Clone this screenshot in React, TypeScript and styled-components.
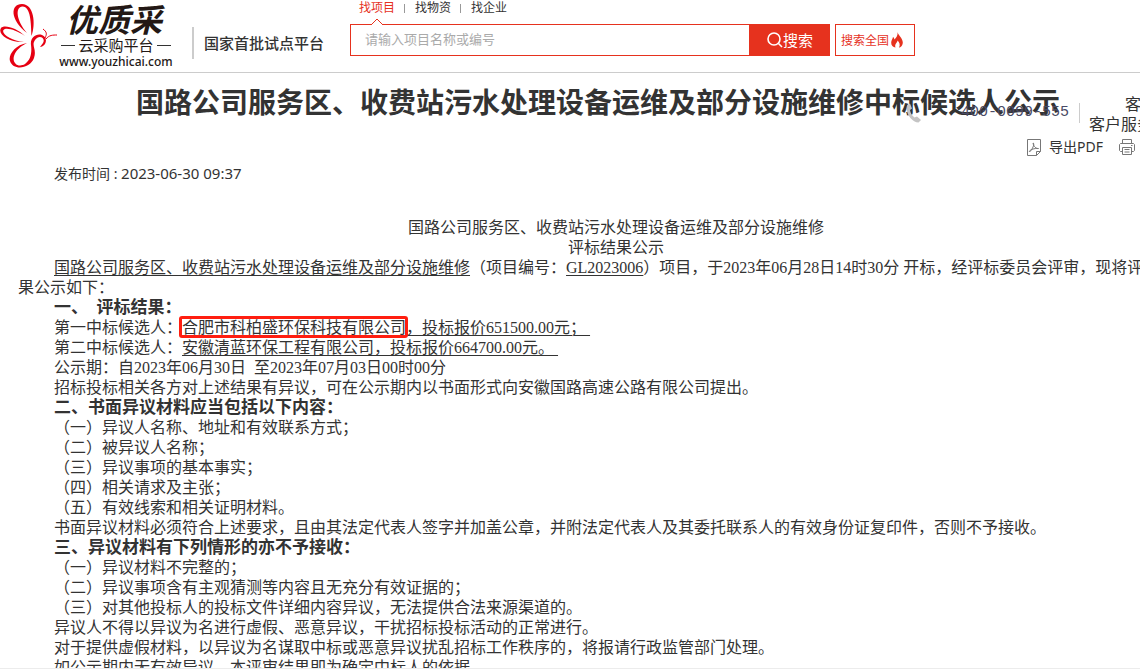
import React from 'react';
import styled, { createGlobalStyle } from 'styled-components';

const sans = `"Noto Sans", "Noto Sans CJK SC", sans-serif`;
const cjk = `"Noto Sans CJK SC", sans-serif`;
const red = '#e6321e';

const Global = createGlobalStyle`
  *, *::before, *::after { box-sizing: border-box; }
  body { margin: 0; background: #fff; color: #333; overflow: hidden; }
`;

const Viewport = styled.div`
  height: 100vh;
  overflow: hidden;
  border-bottom: 1px solid #ececec;
  font-family: ${sans};
`;

const Page = styled.div`
  position: relative;
  min-width: 1196px;
`;

const Header = styled.header`
  display: flex;
  align-items: flex-start;
  height: 73px;
  border-bottom: 1px solid #ccc;
`;

const Brand = styled.a`
  display: flex;
  width: 350px;
  color: #231815;
  text-decoration: none;
`;

const BrandName = styled.span`
  display: flex;
  flex-direction: column;
  align-items: center;
  width: 112px;
  margin-left: 3px;
`;

const Script = styled.span`
  padding-right: 4px;
  font: italic 700 32px/36px ${cjk};
`;

const Platform = styled.span`
  display: flex;
  align-items: center;
  gap: 3px;
  font: 400 15px/18px ${cjk};
  white-space: nowrap;
  &::before, &::after { content: ''; width: 14px; height: 1px; background: #333; }
`;

const Site = styled.span`
  font: 500 12px/16px ${sans};
`;

const Slogan = styled.span`
  align-self: flex-start;
  margin: 27px 0 0 20px;
  padding-left: 10px;
  border-left: 2px solid #ccc;
  font: 500 15px/32px ${cjk};
  color: #333;
  white-space: nowrap;
`;

const SearchArea = styled.div`
  display: flex;
  flex-direction: column;
`;

const Tabs = styled.nav`
  display: flex;
  height: 24px;
  padding-left: 9px;
  font: 12px/14px ${cjk};
`;

const Tab = styled.a<{ $active?: boolean }>`
  position: relative;
  color: ${p => (p.$active ? red : '#333')};
  text-decoration: none;
`;

const TabDivider = styled.span`
  width: 1px;
  height: 9px;
  margin: 4px 10px 0 9px;
  background: #999;
`;

const Caret = styled.svg`
  position: absolute;
  left: 11px;
  top: 18px;
`;

const SearchForm = styled.form`
  display: flex;
  height: 32px;
`;

const SearchInput = styled.input`
  width: 400px;
  padding: 0 14px 2px;
  border: 1px solid ${red};
  border-radius: 0;
  outline: 0;
  font: 13px/20px ${cjk};
  color: #333;
  &::placeholder { color: #aaa; opacity: 1; }
`;

const SearchButton = styled.button`
  display: flex;
  align-items: center;
  justify-content: center;
  width: 80px;
  padding: 0;
  border: 1px solid ${red};
  background: ${red};
  color: #fff;
  font: 400 15px/20px ${cjk};
`;

const NationwideButton = styled(SearchButton)`
  justify-content: flex-start;
  gap: 2px;
  margin-left: 5px;
  padding-left: 5px;
  background: #fff;
  color: ${red};
  font-size: 12px;
`;

const Hotline = styled.aside`
  position: absolute;
  left: 906px;
  top: 93px;
  display: flex;
  align-items: center;
  white-space: nowrap;
`;

const Phone = styled.span`
  margin-left: 40px;
  padding-right: 10px;
  border-right: 1px solid #ccc;
  font: 15px/20px "Liberation Mono", monospace;
  color: #4a4a66;
`;

const Service = styled.span`
  display: flex;
  flex-direction: column;
  margin-left: 9px;
  font: 16px/20px ${cjk};
  & > :first-child { padding-left: 36px; }
`;

const Main = styled.main`
  padding: 8px 18px 0;
`;

const Title = styled.h1`
  margin: 0;
  text-align: center;
  font: bold 28px/40px ${cjk};
  text-spacing-trim: space-all;
`;

const Tools = styled.div`
  display: flex;
  justify-content: flex-end;
  gap: 16px;
  height: 20px;
  margin-top: 16px;
  padding-right: 8px;
`;

const Tool = styled.button`
  display: flex;
  align-items: center;
  gap: 7px;
  padding: 0;
  border: 0;
  background: none;
  color: #333;
  font: 14px/20px ${sans};
`;

const PublishTime = styled.p`
  margin: 6px 0 34px;
  padding-left: 36px;
  font: 14px/20px ${sans};
  height: 20px;
  & > time { font-size: 15px; }
`;

const Article = styled.article`
  padding-top: 1px;
  font: 16px/20px "Liberation Serif", "Noto Sans CJK SC", serif;
  text-spacing-trim: space-all;
`;

const Line = styled.p<{ $center?: boolean }>`
  margin: 0;
  text-indent: 36px;
  text-align: ${p => (p.$center ? 'center' : 'left')};
`;

const Section = styled.h2`
  margin: 0;
  text-indent: 36px;
  font-size: 17px;
  font-weight: bold;
  line-height: 20px;
`;

const U = styled.u`
  text-underline-offset: 2px;
  text-decoration-thickness: 1px;
  white-space: pre-wrap;
`;

const Marked = styled.span`
  position: relative;
  &::after {
    content: '';
    position: absolute;
    inset: -3px -2px -2px -3px;
    border: 3px solid #ff1e10;
    border-radius: 3px;
  }
`;

const Butterfly = () => (
  <svg width="57" height="70" viewBox="0 0 57 70" fill="#e60012">
    <path d="M31.500 36C36 24 34 4 22 4C10 4 10 20 27 33C16 20 15 7 22.500 6.500C31 6.500 31 24 31.500 36Z" />
    <path d="M25 36C17 28 4 24 1 28C-3 34 9 43 24 42C12 41 1 34 3.500 30C6 27 16 30 25 36Z" />
    <path d="M27 43C15 45 8 55 10 61C13 71 30 69 34 58C37 49 31 46 35 40C39 34 46 38 43 43L40 47C47 46 48 37 42 35C36 33 30 38 31 45C32 52 31 60 25 64C18 68 12 63 14 56C16 50 21 46 27 43Z" />
    <path d="M45 38C47 34 47 32 43 29M46 39C49 35 53 35 57 35" fill="none" stroke="#e60012" />
  </svg>
);

const SearchIcon = () => (
  <svg width="16" height="16" viewBox="0 0 16 16" fill="none" stroke="#fff" strokeWidth="1.6">
    <circle cx="7" cy="7" r="6" />
    <path d="M11.500 11.500L15 15" />
  </svg>
);

const Flame = () => (
  <svg width="12" height="16" viewBox="0 0 12 16">
    <path fill={red} d="M6.500 0C7 3 11.800 6 11.800 10.500C11.800 13.500 9.500 15.500 8 15.600C9.500 13 8.500 10.500 6.500 8.500C6.500 10.500 3.200 12 4.500 15.600C2 15 0 13.500 0.200 10.500C0.300 8.500 1.500 7 2 5C3 5.500 3.300 6.500 3.300 7.500C5.500 5.500 7 3 6.500 0Z" />
  </svg>
);

const PdfIcon = () => (
  <svg width="15" height="17" viewBox="0 0 15 17" fill="none" stroke="#777">
    <path d="M.5.5h13v12l-4 4h-9zM13.500 12.500h-4v4" />
    <path d="M6 4c2 0 0 6-3.500 9c-1-2 5-4 9-3.500c-2 .5-5-2-5.500-5.500" />
  </svg>
);

const PrintIcon = () => (
  <svg width="16" height="16" viewBox="0 0 16 16" fill="none" stroke="#777">
    <path d="M3.500 4.500v-4h9v4M3.500 12.500h-2l-1-1v-6l1-1h13l1 1v6l-1 1h-2M3.500 8.500h9v7h-9zM5.500 10.500h5M5.500 13h5M12 6.500h1.500" />
  </svg>
);

const Handset = () => (
  <svg width="15" height="20" viewBox="0 0 15 20" fill="#c4c4c4">
    <path d="M1 2.500L4 .5L6 5.500L4 7C4.500 10 6 12.500 8.500 14.500L11 13.500L15 17L12.500 19.500C6 19.500-1 10 1 2.500Z" />
  </svg>
);

export default function App() {
  return (
    <Viewport>
      <Global />
      <Page>
        <Header>
          <Brand href="#">
            <Butterfly />
            <BrandName>
              <Script>优质采</Script>
              <Platform>云采购平台</Platform>
              <Site>www.youzhicai.com</Site>
            </BrandName>
            <Slogan>国家首批试点平台</Slogan>
          </Brand>
          <SearchArea>
            <Tabs>
              <Tab href="#" $active>
                找项目
                <Caret width="14" height="8" viewBox="0 0 14 8" fill="#fff" stroke={red}>
                  <path d="M1 7L7 1L13 7" />
                </Caret>
              </Tab>
              <TabDivider />
              <Tab href="#">找物资</Tab>
              <TabDivider />
              <Tab href="#">找企业</Tab>
            </Tabs>
            <SearchForm>
              <SearchInput aria-label="搜索" placeholder="请输入项目名称或编号" />
              <SearchButton type="button"><SearchIcon />搜索</SearchButton>
              <NationwideButton type="button">搜索全国<Flame /></NationwideButton>
            </SearchForm>
          </SearchArea>
        </Header>
        <Main>
          <Title>国路公司服务区、收费站污水处理设备运维及部分设施维修中标候选人公示</Title>
          <Tools>
            <Tool type="button"><PdfIcon />导出PDF</Tool>
            <Tool type="button"><PrintIcon />打印</Tool>
          </Tools>
          <PublishTime>发布时间 : <time dateTime="2023-06-30T09:37">2023-06-30 09:37</time></PublishTime>
          <Article>
            <Line $center>国路公司服务区、收费站污水处理设备运维及部分设施维修</Line>
            <Line $center>评标结果公示</Line>
            <Line>
              <U>国路公司服务区、收费站污水处理设备运维及部分设施维修</U>（项目编号：<U>GL2023006</U>）项目，于2023年06月28日14时30分 开标，经评标委员会评审，现将评标结果公示如下：
            </Line>
            <Section>一、&nbsp; 评标结果：</Section>
            <Line>第一中标候选人：<U><Marked>合肥市科柏盛环保科技有限公司</Marked>，投标报价651500.00元；&nbsp;</U></Line>
            <Line>第二中标候选人：<U>安徽清蓝环保工程有限公司，投标报价664700.00元。&nbsp;</U></Line>
            <Line>公示期：自2023年06月30日&nbsp; 至2023年07月03日00时00分</Line>
            <Line>招标投标相关各方对上述结果有异议，可在公示期内以书面形式向安徽国路高速公路有限公司提出。</Line>
            <Section>二、书面异议材料应当包括以下内容：</Section>
            <Line>（一）异议人名称、地址和有效联系方式；</Line>
            <Line>（二）被异议人名称；</Line>
            <Line>（三）异议事项的基本事实；</Line>
            <Line>（四）相关请求及主张；</Line>
            <Line>（五）有效线索和相关证明材料。</Line>
            <Line>书面异议材料必须符合上述要求，且由其法定代表人签字并加盖公章，并附法定代表人及其委托联系人的有效身份证复印件，否则不予接收。</Line>
            <Section>三、异议材料有下列情形的亦不予接收：</Section>
            <Line>（一）异议材料不完整的；</Line>
            <Line>（二）异议事项含有主观猜测等内容且无充分有效证据的；</Line>
            <Line>（三）对其他投标人的投标文件详细内容异议，无法提供合法来源渠道的。</Line>
            <Line>异议人不得以异议为名进行虚假、恶意异议，干扰招标投标活动的正常进行。</Line>
            <Line>对于提供虚假材料，以异议为名谋取中标或恶意异议扰乱招标工作秩序的，将报请行政监管部门处理。</Line>
            <Line>如公示期内无有效异议，本评审结果即为确定中标人的依据。</Line>
          </Article>
        </Main>
        <Hotline>
          <Handset />
          <Phone>400-0099-555</Phone>
          <Service><span>客服</span><span>客户服务</span></Service>
        </Hotline>
      </Page>
    </Viewport>
  );
}
